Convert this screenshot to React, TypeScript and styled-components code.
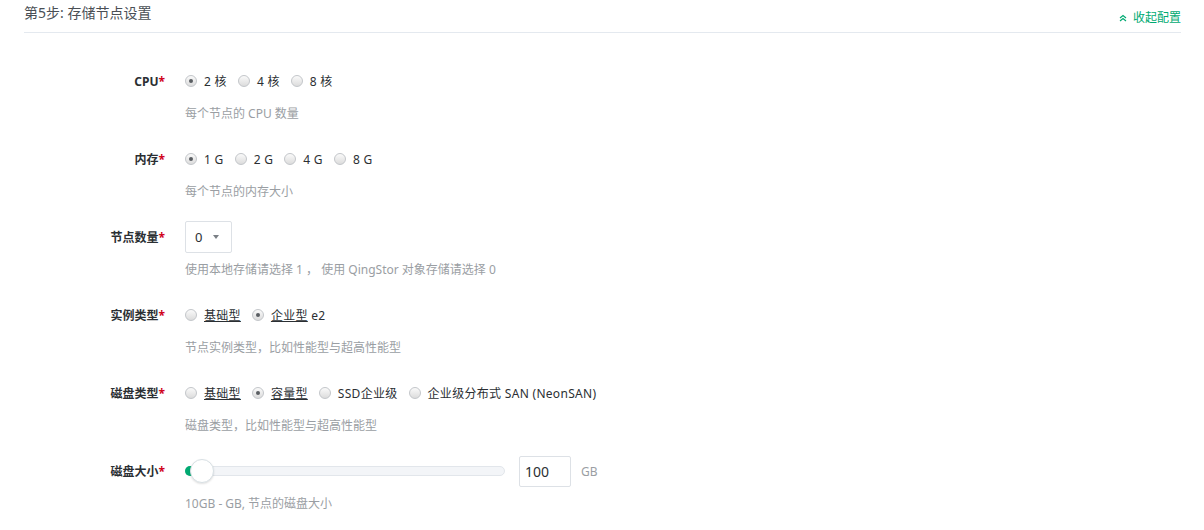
import React from "react";
import styled, { createGlobalStyle } from "styled-components";

const Global = createGlobalStyle`
  html, body { margin: 0; padding: 0; background: #fff; }
  body { font-family: "Noto Sans", "Noto Sans CJK SC", sans-serif; font-size: 12px; color: #333; }
`;

const Page = styled.div`
  padding: 0 23px 0 24px;
`;

const Header = styled.div`
  display: flex;
  justify-content: space-between;
  align-items: flex-start;
  height: 32px;
  border-bottom: 1px solid #e4e9ef;
`;

const Title = styled.div`
  font-size: 14px;
  line-height: 20px;
  padding-top: 3px;
  color: #4a4f55;
`;

const Collapse = styled.a`
  display: flex;
  align-items: center;
  gap: 6px;
  margin-top: 10px;
  font-size: 12px;
  line-height: 16px;
  color: #00aa72;
  cursor: pointer;
`;

const Form = styled.div`
  display: flex;
  flex-direction: column;
  gap: 20px;
  padding-top: 32px;
`;

const Row = styled.div`
  display: grid;
  grid-template-columns: 141px 1fr;
  column-gap: 20px;
`;

const Label = styled.div`
  height: 32px;
  display: flex;
  align-items: center;
  justify-content: flex-end;
  font-weight: 700;
  color: #2b2f33;
`;

const Star = styled.span`
  color: #d0021b;
  font-weight: 700;
`;

const Content = styled.div`
  display: flex;
  flex-direction: column;
`;

const Field = styled.div`
  height: 32px;
  display: flex;
  align-items: center;
`;

const Help = styled.div`
  margin-top: 8px;
  line-height: 18px;
  color: #9a9ea3;
`;

const RadioItem = styled.label`
  display: flex;
  align-items: center;
  margin-right: 11px;
  color: #2b2f33;
  letter-spacing: 0.3px;
  white-space: pre;
`;

const LinkText = styled.span`
  text-decoration: underline;
`;

const RadioCircle = styled.i<{ $checked?: boolean }>`
  position: relative;
  width: 12px;
  height: 12px;
  border-radius: 50%;
  border: 1px solid #c3c6ca;
  background: linear-gradient(#fafafa, #dcdcdc);
  margin-right: 7px;
  box-sizing: border-box;
  flex: none;
  &::after {
    content: "";
    display: ${(p) => (p.$checked ? "block" : "none")};
    position: absolute;
    left: 3px;
    top: 3px;
    width: 4px;
    height: 4px;
    border-radius: 50%;
    background: #5a5e62;
  }
`;

const Select = styled.div`
  box-sizing: border-box;
  width: 47px;
  height: 32px;
  border: 1px solid #dde1e6;
  border-radius: 2px;
  display: flex;
  align-items: center;
  padding-left: 9px;
  gap: 11px;
  font-size: 13px;
  color: #2b2f33;
`;

const Caret = styled.span`
  width: 0;
  height: 0;
  border-left: 3.5px solid transparent;
  border-right: 3.5px solid transparent;
  border-top: 4px solid #7a7f85;
`;

const SliderTrack = styled.div`
  position: relative;
  box-sizing: border-box;
  width: 320px;
  height: 10px;
  border-radius: 5px;
  background: #f3f5f8;
  border: 1px solid #e2e6eb;
`;

const SliderFill = styled.div`
  position: absolute;
  left: -1px;
  top: -1px;
  height: 10px;
  width: 12px;
  border-radius: 5px 0 0 5px;
  background: #00aa72;
`;

const Handle = styled.div`
  position: absolute;
  left: 4px;
  top: 50%;
  width: 24px;
  height: 24px;
  margin-top: -12px;
  box-sizing: border-box;
  border-radius: 50%;
  background: #fff;
  border: 1px solid #d8e0e4;
  box-shadow: 0 1px 2px rgba(0, 0, 0, 0.12);
`;

const NumInput = styled.div`
  box-sizing: border-box;
  width: 52px;
  height: 31px;
  margin-left: 14px;
  border: 1px solid #dde1e6;
  border-radius: 2px;
  display: flex;
  align-items: center;
  padding-left: 5px;
  font-size: 14px;
  color: #2b2f33;
`;

const Unit = styled.span`
  margin-left: 10px;
  color: #9a9ea3;
`;

type Opt = { text: string; link?: string; checked?: boolean };

const Radios = ({ opts }: { opts: Opt[] }) => (
  <>
    {opts.map((o) => (
      <RadioItem key={(o.link || "") + o.text}>
        <RadioCircle $checked={o.checked} />
        {o.link && <LinkText>{o.link}</LinkText>}
        {o.text && <span>{o.text}</span>}
      </RadioItem>
    ))}
  </>
);

const FormRow = ({
  label,
  help,
  children,
}: {
  label: string;
  help: string;
  children: React.ReactNode;
}) => (
  <Row>
    <Label>
      {label}
      <Star>*</Star>
    </Label>
    <Content>
      <Field>{children}</Field>
      <Help>{help}</Help>
    </Content>
  </Row>
);

export default function App() {
  return (
    <>
      <Global />
      <Page>
        <Header>
          <Title>第5步: 存储节点设置</Title>
          <Collapse>
            <svg width="8" height="8" viewBox="0 0 8 8" fill="none" stroke="#00aa72" strokeWidth="1.2">
              <path d="M1 4 L4 1.5 L7 4" />
              <path d="M1 7 L4 4.5 L7 7" />
            </svg>
            收起配置
          </Collapse>
        </Header>
        <Form>
          <FormRow label="CPU" help="每个节点的 CPU 数量">
            <Radios opts={[{ text: "2 核", checked: true }, { text: "4 核" }, { text: "8 核" }]} />
          </FormRow>
          <FormRow label="内存" help="每个节点的内存大小">
            <Radios
              opts={[{ text: "1 G", checked: true }, { text: "2 G" }, { text: "4 G" }, { text: "8 G" }]}
            />
          </FormRow>
          <FormRow label="节点数量" help="使用本地存储请选择 1 ， 使用 QingStor 对象存储请选择 0">
            <Select>
              0<Caret />
            </Select>
          </FormRow>
          <FormRow label="实例类型" help="节点实例类型，比如性能型与超高性能型">
            <Radios
              opts={[
                { link: "基础型", text: "" },
                { link: "企业型", text: " e2", checked: true },
              ]}
            />
          </FormRow>
          <FormRow label="磁盘类型" help="磁盘类型，比如性能型与超高性能型">
            <Radios
              opts={[
                { link: "基础型", text: "" },
                { link: "容量型", text: "", checked: true },
                { text: "SSD企业级" },
                { text: "企业级分布式 SAN (NeonSAN)" },
              ]}
            />
          </FormRow>
          <FormRow label="磁盘大小" help="10GB - GB, 节点的磁盘大小">
            <SliderTrack>
              <SliderFill />
              <Handle />
            </SliderTrack>
            <NumInput>100</NumInput>
            <Unit>GB</Unit>
          </FormRow>
        </Form>
      </Page>
    </>
  );
}
